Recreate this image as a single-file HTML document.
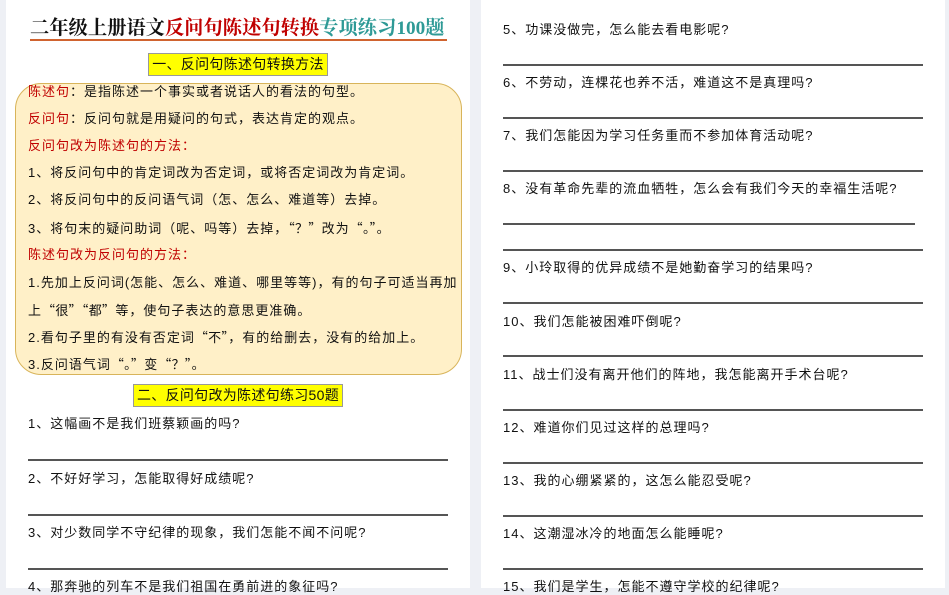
<!DOCTYPE html>
<html><head><meta charset="utf-8"><style>
*{margin:0;padding:0;box-sizing:border-box}
body{width:949px;height:588px;overflow:hidden;background:#eef0f5;position:relative;font-family:"Liberation Sans","Noto Sans CJK SC",sans-serif;font-size:13px;color:#111;letter-spacing:1px}
.pg{position:absolute;top:0;height:588px;background:#fff}
.t{position:absolute;white-space:nowrap;line-height:16px}
.q{font-family:"Noto Sans CJK SC",sans-serif;letter-spacing:0.3px}
.r{color:#c00000}
.ln{position:absolute;height:2px;background:#555}
.hd{position:absolute;background:#ffff00;border:1px solid #999;font-size:14px;line-height:20px;text-align:center;white-space:nowrap;letter-spacing:0.3px}
</style></head><body>
<div class="pg" style="left:6px;width:464px"></div>
<div class="pg" style="left:481px;width:464px"></div>

<div class="t" style="left:30px;top:17px;font-size:19.3px;line-height:24px;letter-spacing:0;font-weight:bold;font-family:'Liberation Serif','Noto Serif CJK SC',serif">二年级上册语文<span style="color:#c00000">反问句陈述句转换</span><span style="color:#2e9a96">专项练习100题</span></div>
<div style="position:absolute;left:30px;top:39px;width:417px;height:2px;background:#d0632f"></div>

<div class="hd" style="left:148px;top:53px;width:180px;height:23px">一、反问句陈述句转换方法</div>

<div style="position:absolute;left:15px;top:83px;width:447px;height:292px;background:#fff0c8;border:1px solid #d8b45a;border-radius:26px"></div>
<div class="t" style="left:28px;top:84px"><span class="r">陈述句</span>：是指陈述一个事实或者说话人的看法的句型。</div>
<div class="t" style="left:28px;top:111px"><span class="r">反问句</span>：反问句就是用疑问的句式，表达肯定的观点。</div>
<div class="t r" style="left:28px;top:138px">反问句改为陈述句的方法：</div>
<div class="t" style="left:28px;top:165px">1、将反问句中的肯定词改为否定词，或将否定词改为肯定词。</div>
<div class="t" style="left:28px;top:192px">2、将反问句中的反问语气词（怎、怎么、难道等）去掉。</div>
<div class="t" style="left:28px;top:220px">3、将句末的疑问助词（呢、吗等）去掉，<span class="q">“？”</span>改为<span class="q">“。”</span>。</div>
<div class="t r" style="left:28px;top:247px">陈述句改为反问句的方法：</div>
<div class="t" style="left:28px;top:275px">1.先加上反问词(怎能、怎么、难道、哪里等等)，有的句子可适当再加</div>
<div class="t" style="left:28px;top:302px">上<span class="q">“很”“都”</span>等，使句子表达的意思更准确。</div>
<div class="t" style="left:28px;top:329px">2.看句子里的有没有否定词<span class="q">“不”</span>，有的给删去，没有的给加上。</div>
<div class="t" style="left:28px;top:356px">3.反问语气词<span class="q">“。”</span>变<span class="q">“？”</span>。</div>

<div class="hd" style="left:133px;top:384px;width:210px;height:23px">二、反问句改为陈述句练习50题</div>

<div class="t" style="left:28px;top:416px">1、这幅画不是我们班蔡颖画的吗?</div>
<div class="ln" style="left:28px;top:459px;width:420px"></div>
<div class="t" style="left:28px;top:471px">2、不好好学习，怎能取得好成绩呢?</div>
<div class="ln" style="left:28px;top:514px;width:420px"></div>
<div class="t" style="left:28px;top:525px">3、对少数同学不守纪律的现象，我们怎能不闻不问呢?</div>
<div class="ln" style="left:28px;top:568px;width:420px"></div>
<div class="t" style="left:28px;top:579px">4、那奔驰的列车不是我们祖国在勇前进的象征吗?</div>

<div class="t" style="left:503px;top:22px">5、功课没做完，怎么能去看电影呢?</div>
<div class="ln" style="left:503px;top:64px;width:420px"></div>
<div class="t" style="left:503px;top:75px">6、不劳动，连棵花也养不活，难道这不是真理吗?</div>
<div class="ln" style="left:503px;top:117px;width:420px"></div>
<div class="t" style="left:503px;top:128px">7、我们怎能因为学习任务重而不参加体育活动呢?</div>
<div class="ln" style="left:503px;top:170px;width:420px"></div>
<div class="t" style="left:503px;top:181px">8、没有革命先辈的流血牺牲，怎么会有我们今天的幸福生活呢?</div>
<div class="ln" style="left:503px;top:223px;width:412px"></div>
<div class="ln" style="left:503px;top:249px;width:420px"></div>
<div class="t" style="left:503px;top:260px">9、小玲取得的优异成绩不是她勤奋学习的结果吗?</div>
<div class="ln" style="left:503px;top:302px;width:420px"></div>
<div class="t" style="left:503px;top:314px">10、我们怎能被困难吓倒呢?</div>
<div class="ln" style="left:503px;top:355px;width:420px"></div>
<div class="t" style="left:503px;top:367px">11、战士们没有离开他们的阵地，我怎能离开手术台呢?</div>
<div class="ln" style="left:503px;top:409px;width:420px"></div>
<div class="t" style="left:503px;top:420px">12、难道你们见过这样的总理吗?</div>
<div class="ln" style="left:503px;top:462px;width:420px"></div>
<div class="t" style="left:503px;top:473px">13、我的心绷紧紧的，这怎么能忍受呢?</div>
<div class="ln" style="left:503px;top:515px;width:420px"></div>
<div class="t" style="left:503px;top:526px">14、这潮湿冰冷的地面怎么能睡呢?</div>
<div class="ln" style="left:503px;top:568px;width:420px"></div>
<div class="t" style="left:503px;top:579px">15、我们是学生，怎能不遵守学校的纪律呢?</div>
</body></html>
